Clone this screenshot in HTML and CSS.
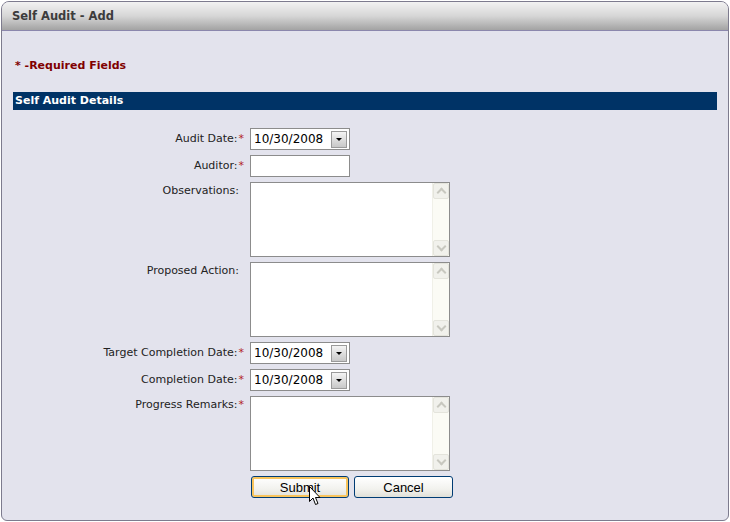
FILE: index.html
```html
<!DOCTYPE html>
<html lang="en">
<head>
    <meta charset="UTF-8">
    <title>Self Audit - Add</title>
    <link rel="stylesheet" href="styles.css">
</head>
<body>
    <div class="window">
        <div class="title-bar">Self Audit - Add</div>
        <div class="content">
            <div class="required-note">* -Required Fields</div>
            <div class="section-head">Self Audit Details</div>

            <div class="form">
                <label class="lbl">Audit Date:<span class="req">*</span></label>
                <div class="date-box">
                    <span class="date-text">10/30/2008</span>
                    <span class="drop-btn"><span class="arrow"></span></span>
                </div>

                <label class="lbl">Auditor:<span class="req">*</span></label>
                <div class="text-box"></div>

                <label class="lbl lbl-top">Observations:</label>
                <div class="memo">
                    <div class="memo-text"></div>
                    <div class="scroll">
                        <span class="sbtn up"></span>
                        <span class="sbtn down"></span>
                    </div>
                </div>

                <label class="lbl lbl-top">Proposed Action:</label>
                <div class="memo">
                    <div class="memo-text"></div>
                    <div class="scroll">
                        <span class="sbtn up"></span>
                        <span class="sbtn down"></span>
                    </div>
                </div>

                <label class="lbl">Target Completion Date:<span class="req">*</span></label>
                <div class="date-box">
                    <span class="date-text">10/30/2008</span>
                    <span class="drop-btn"><span class="arrow"></span></span>
                </div>

                <label class="lbl">Completion Date:<span class="req">*</span></label>
                <div class="date-box">
                    <span class="date-text">10/30/2008</span>
                    <span class="drop-btn"><span class="arrow"></span></span>
                </div>

                <label class="lbl lbl-top">Progress Remarks:<span class="req">*</span></label>
                <div class="memo">
                    <div class="memo-text"></div>
                    <div class="scroll">
                        <span class="sbtn up"></span>
                        <span class="sbtn down"></span>
                    </div>
                </div>

                <div></div>
                <div class="buttons">
                    <button class="btn focused">Submit
                        <svg class="cursor" width="12" height="20" viewBox="0 0 12 20">
                            <path d="M0.5 0.5 L0.5 15.5 L4 12 L6.5 18.5 L9 17.5 L6.5 11.5 L11 11.5 Z" fill="#fff" stroke="#000" stroke-width="1"/>
                        </svg>
                    </button>
                    <button class="btn cancel">Cancel</button>
                </div>
            </div>
        </div>
    </div>
</body>
</html>
```

FILE: styles.css
```css
body {
    margin: 0;
    background: #fff;
    font-family: "DejaVu Sans", Verdana, sans-serif;
}

.window {
    margin: 1px;
    width: 728px;
    height: 520px;
    box-sizing: border-box;
    border: 1px solid #7d7b8e;
    border-radius: 8px 8px 6px 6px;
    background: #e3e3ed;
    overflow: hidden;
}

.title-bar {
    height: 28px;
    line-height: 28px;
    padding-left: 10px;
    font-size: 11.5px;
    font-weight: bold;
    color: #3c3c3c;
    background: linear-gradient(#f2f2f2, #d6d6d6 50%, #a3a3a3);
    border-bottom: 1px solid #8b87ad;
}

.content {
    padding: 0 11px;
}

.required-note {
    margin-top: 28px;
    height: 14px;
    line-height: 14px;
    font-size: 11px;
    font-weight: bold;
    color: #800000;
    padding-left: 2px;
}

.section-head {
    margin-top: 19px;
    height: 18px;
    line-height: 18px;
    background: #003366;
    color: #fff;
    font-size: 11px;
    font-weight: bold;
    padding-left: 2px;
}

.form {
    display: grid;
    grid-template-columns: 231px auto;
    column-gap: 6px;
    row-gap: 5px;
    margin-top: 18px;
    align-items: start;
}

.lbl {
    font-size: 11px;
    color: #222;
    text-align: right;
    line-height: 22px;
}

.lbl-top {
    line-height: 14px;
    padding-top: 2px;
    padding-right: 5px;
}

.lbl-top .req {
    margin-right: -5px;
}

.req {
    color: #b22222;
    margin-left: 1px;
}

.date-box {
    width: 100px;
    height: 22px;
    box-sizing: border-box;
    border: 1px solid #8c8c8c;
    background: #fff;
    display: flex;
    align-items: center;
    justify-content: space-between;
    padding: 0 2px 0 3px;
}

.date-text {
    font-size: 12px;
    color: #000;
}

.drop-btn {
    width: 16px;
    height: 17px;
    box-sizing: border-box;
    border: 1px solid #9a9a9a;
    background: linear-gradient(#f4f4f4, #c8c8c8);
    display: flex;
    align-items: center;
    justify-content: center;
}

.arrow {
    width: 0;
    height: 0;
    border-left: 3px solid transparent;
    border-right: 3px solid transparent;
    border-top: 3px solid #000;
}

.text-box {
    width: 100px;
    height: 22px;
    box-sizing: border-box;
    border: 1px solid #8c8c8c;
    background: #fff;
}

.memo {
    width: 200px;
    height: 75px;
    box-sizing: border-box;
    border: 1px solid #8c8c8c;
    background: #fff;
    display: flex;
}

.memo-text {
    flex: 1;
}

.scroll {
    width: 16px;
    background: #fbfbf5;
    display: flex;
    flex-direction: column;
    justify-content: space-between;
    border-left: 1px solid #f0f0e8;
}

.sbtn {
    height: 16px;
    box-sizing: border-box;
    border: 1px solid #e4e4dc;
    border-radius: 2px;
    background: #f1f1ec;
    position: relative;
}

.sbtn::after {
    content: "";
    position: absolute;
    left: 4px;
    width: 5px;
    height: 5px;
    border-left: 2px solid #c8c8c0;
    border-top: 2px solid #c8c8c0;
}

.sbtn.up::after {
    top: 5px;
    transform: rotate(45deg);
}

.sbtn.down::after {
    top: 2px;
    transform: rotate(225deg);
}

.buttons {
    display: flex;
    gap: 5px;
    margin-left: 1px;
}

.btn {
    width: 98px;
    height: 22px;
    border: 1px solid #003c74;
    border-radius: 3px;
    background: linear-gradient(#ffffff, #f2f2ee 60%, #e0e0d8);
    font-family: "Liberation Sans", Arial, sans-serif;
    font-size: 13px;
    color: #000;
    padding: 0;
    position: relative;
}

.btn.cancel {
    width: 99px;
}

.btn.focused {
    box-shadow: inset 0 0 0 2px #f8c45c;
}

.cursor {
    position: absolute;
    left: 57px;
    top: 9px;
}
```
